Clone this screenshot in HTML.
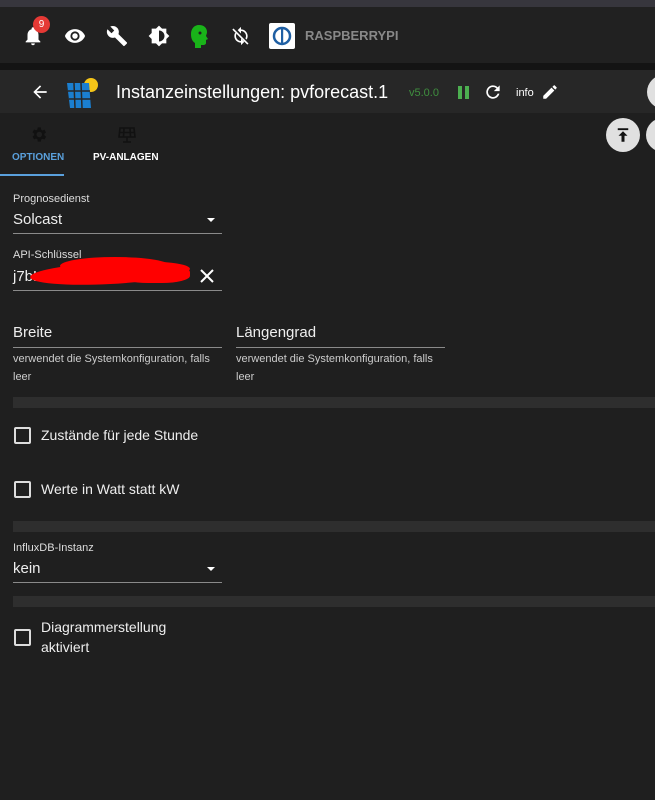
<!DOCTYPE html><html><head><meta charset="utf-8"><style>
body{margin:0;width:655px;height:800px;background:#1f1f1f;font-family:"Liberation Sans",sans-serif;color:#e8e8e8;position:relative;overflow:hidden}
.a{position:absolute}
.lbl{font-size:11px;color:#ddd}
.val{font-size:15px;color:#eee}
.line{height:1px;background:#8a8a8a}
.band{left:13px;width:642px;height:11px;background:#2e2e2e}
.cb{width:13px;height:13px;border:2px solid #ddd;border-radius:2px}
.help{font-size:11px;color:#ccc;line-height:18px}
</style></head><body>
<div class="a" style="left:0;top:0;width:655px;height:7px;background:#37363d"></div>
<div class="a" style="left:0;top:7px;width:655px;height:56px;background:#212121"></div>
<div class="a" style="left:0;top:63px;width:655px;height:7px;background:#141414"></div>
<div class="a" style="left:0;top:70px;width:655px;height:43px;background:#272727"></div>
<svg class="a" style="left:22px;top:25px" width="22" height="22" viewBox="0 0 24 24"><path fill="#fff" d="M12 22a2 2 0 0 0 2-2h-4a2 2 0 0 0 2 2zm6-6v-5c0-3.1-1.6-5.6-4.5-6.3V4a1.5 1.5 0 0 0-3 0v.7C7.6 5.4 6 7.9 6 11v5l-2 2v1h16v-1z"/></svg>
<div class="a" style="left:33px;top:16px;width:17px;height:17px;border-radius:50%;background:#e53935;font-size:10px;color:#fff;text-align:center;line-height:17px">9</div>
<svg class="a" style="left:64px;top:25px" width="22" height="22" viewBox="0 0 24 24"><path fill="#fff" d="M12 4.5C7 4.5 2.7 7.6 1 12c1.7 4.4 6 7.5 11 7.5s9.3-3.1 11-7.5c-1.7-4.4-6-7.5-11-7.5zM12 17a5 5 0 1 1 0-10 5 5 0 0 1 0 10zm0-8a3 3 0 1 0 0 6 3 3 0 0 0 0-6z"/></svg>
<svg class="a" style="left:106px;top:25px" width="22" height="22" viewBox="0 0 24 24"><path fill="#fff" d="M22.7 19l-9.1-9.1c.9-2.300.4-5-1.5-6.9-2-2-5-2.4-7.4-1.3L9 6 6 9 1.6 4.7C.4 7.1.9 10.1 2.9 12.1c1.9 1.9 4.6 2.4 6.9 1.5l9.1 9.1c.4.4 1 .4 1.4 0l2.3-2.3c.5-.4.5-1.1.1-1.4z"/></svg>
<svg class="a" style="left:148px;top:25px" width="22" height="22" viewBox="0 0 24 24"><path fill="#fff" d="M20 8.7V4h-4.7L12 .7 8.7 4H4v4.7L.7 12 4 15.3V20h4.7l3.3 3.3 3.3-3.3H20v-4.7l3.3-3.3L20 8.7zM12 18V6c3.3 0 6 2.7 6 6s-2.7 6-6 6z"/></svg>
<svg class="a" style="left:190px;top:24px" width="20" height="24" viewBox="0 0 20 24"><path fill="#19b319" d="M9 1c5 0 8 3 8 7 0 2-1 3-1 4l2 3-2 1v3c0 1-1 2-3 2h-2v3H5v-5C2 17 1 14 1 10 1 5 4 1 9 1z"/><circle cx="10" cy="9" r="1.5" fill="#222"/></svg>
<svg class="a" style="left:231px;top:26px" width="20" height="20" viewBox="0 0 24 24"><path fill="#fff" d="M12 4V1L8 5l4 4V6c3.3 0 6 2.7 6 6 0 1-.3 2-.7 2.8l1.5 1.5C19.5 15 20 13.6 20 12c0-4.4-3.6-8-8-8zm0 14c-3.3 0-6-2.7-6-6 0-1 .3-2 .7-2.8L5.2 7.7C4.5 9 4 10.4 4 12c0 4.4 3.6 8 8 8v3l4-4-4-4v3zM3 3l18 18-1.4 1.4L1.6 4.4z"/></svg>
<div class="a" style="left:269px;top:23px;width:26px;height:26px;background:#fff;border-radius:2px"></div>
<svg class="a" style="left:271px;top:25px" width="22" height="22" viewBox="0 0 22 22"><circle cx="11" cy="11" r="8" fill="none" stroke="#1f5fa3" stroke-width="2.5"/><rect x="10" y="4" width="2.2" height="14" fill="#1f5fa3"/></svg>
<div class="a" style="left:305px;top:28px;font-size:13px;font-weight:bold;color:#888">RASPBERRYPI</div>
<svg class="a" style="left:30px;top:82px" width="20" height="20" viewBox="0 0 24 24"><path fill="#fff" d="M20 11H7.8l5.6-5.6L12 4l-8 8 8 8 1.4-1.4L7.8 13H20z"/></svg>
<svg class="a" style="left:64px;top:74px" width="38" height="36" viewBox="0 0 38 36"><circle cx="27" cy="11" r="7" fill="#f5c518"/><path fill="#1b7fd0" d="M3 9h22l2 25H6z"/><path stroke="#272727" stroke-width="1.5" d="M10 9l1 25M17 9l1 25M4 17h22M5 25h22"/></svg>
<div class="a" style="left:116px;top:82px;font-size:18px;color:#fff">Instanzeinstellungen: pvforecast.1</div>
<div class="a" style="left:409px;top:87px;font-size:11px;color:#3f8f3f">v5.0.0</div>
<div class="a" style="left:458px;top:86px;width:4px;height:13px;background:#4caf50"></div>
<div class="a" style="left:465px;top:86px;width:4px;height:13px;background:#4caf50"></div>
<svg class="a" style="left:483px;top:82px" width="20" height="20" viewBox="0 0 24 24"><path fill="#fff" d="M17.6 6.4A8 8 0 1 0 19.7 14h-2.1A6 6 0 1 1 12 6c1.7 0 3.1.7 4.2 1.8L13 11h7V4z"/></svg>
<div class="a" style="left:516px;top:87px;font-size:11px;color:#fff">info</div>
<svg class="a" style="left:541px;top:83px" width="18" height="18" viewBox="0 0 24 24"><path fill="#fff" d="M3 17.2V21h3.8l11-11-3.8-3.8zM20.7 7c.4-.4.4-1 0-1.4l-2.3-2.3c-.4-.4-1-.4-1.4 0l-1.8 1.8 3.8 3.8z"/></svg>
<div class="a" style="left:647px;top:75px;width:34px;height:34px;border-radius:50%;background:#e0e0e0"></div>
<svg class="a" style="left:29px;top:125px" width="19" height="19" viewBox="0 0 24 24"><path fill="#111" d="M19.4 13a7.5 7.5 0 0 0 0-2l2.1-1.6-2-3.5-2.5 1a7 7 0 0 0-1.7-1L15 3h-4l-.4 2.7a7 7 0 0 0-1.7 1l-2.5-1-2 3.5L6.6 11a7.5 7.5 0 0 0 0 2l-2.1 1.6 2 3.5 2.5-1c.5.4 1.1.7 1.7 1L11 21h4l.4-2.700c.6-.3 1.2-.6 1.700-1l2.5 1 2-3.5zM13 15.5a3.5 3.5 0 1 1 0-7 3.5 3.5 0 0 1 0 7z"/></svg>
<svg class="a" style="left:117px;top:126px" width="20" height="18" viewBox="0 0 20 18"><path fill="none" stroke="#111" stroke-width="1.6" d="M3 2h14l1 9H2zM7 2l-.5 9M13 2l.5 9M2.5 6.5h15M10 11v5M6 16h8"/></svg>
<div class="a" style="left:12px;top:152px;font-size:10px;font-weight:bold;color:#5aa0dc">OPTIONEN</div>
<div class="a" style="left:93px;top:152px;font-size:10px;font-weight:bold;color:#fff">PV-ANLAGEN</div>
<div class="a" style="left:0;top:174px;width:64px;height:2px;background:#5aa0dc"></div>
<div class="a" style="left:0;top:113px;width:0;height:0"></div>
<div class="a" style="left:606px;top:118px;width:34px;height:34px;border-radius:50%;background:#e0e0e0"></div>
<svg class="a" style="left:614px;top:126px" width="18" height="18" viewBox="0 0 24 24"><path fill="#111" d="M5 3h14v2.5H5zm7 4l-6 6h4v8h4v-8h4z"/></svg>
<div class="a" style="left:646px;top:118px;width:34px;height:34px;border-radius:50%;background:#e0e0e0"></div>
<div class="a lbl" style="left:13px;top:193px">Prognosedienst</div>
<div class="a val" style="left:13px;top:211px">Solcast</div>
<div class="a" style="left:207px;top:218px;border-left:4px solid transparent;border-right:4px solid transparent;border-top:4px solid #fff"></div>
<div class="a line" style="left:13px;top:233px;width:209px"></div>
<div class="a lbl" style="left:13px;top:249px">API-Schlüssel</div>
<div class="a val" style="left:13px;top:268px">j7bL.            5</div>
<div class="a" style="left:30px;top:262px;width:160px;height:22px;background:#f00;border-radius:50%;transform:rotate(-3deg)"></div>
<div class="a" style="left:60px;top:257px;width:110px;height:18px;background:#f00;border-radius:50%"></div>
<div class="a" style="left:120px;top:265px;width:70px;height:18px;background:#f00;border-radius:40%"></div>
<svg class="a" style="left:199px;top:268px" width="16" height="16" viewBox="0 0 16 16"><path stroke="#fff" stroke-width="2" d="M2 2l12 12M14 2L2 14"/></svg>
<div class="a line" style="left:13px;top:290px;width:209px"></div>
<div class="a val" style="left:13px;top:324px">Breite</div>
<div class="a line" style="left:13px;top:347px;width:209px"></div>
<div class="a help" style="left:13px;top:350px;width:215px">verwendet die Systemkonfiguration, falls leer</div>
<div class="a val" style="left:236px;top:324px">Längengrad</div>
<div class="a line" style="left:236px;top:347px;width:209px"></div>
<div class="a help" style="left:236px;top:350px;width:215px">verwendet die Systemkonfiguration, falls leer</div>
<div class="a band" style="top:397px"></div>
<div class="a cb" style="left:14px;top:427px"></div>
<div class="a val" style="left:41px;top:427px;font-size:14px">Zustände für jede Stunde</div>
<div class="a cb" style="left:14px;top:481px"></div>
<div class="a val" style="left:41px;top:481px;font-size:14px">Werte in Watt statt kW</div>
<div class="a band" style="top:521px"></div>
<div class="a lbl" style="left:13px;top:542px">InfluxDB-Instanz</div>
<div class="a val" style="left:13px;top:560px">kein</div>
<div class="a" style="left:207px;top:567px;border-left:4px solid transparent;border-right:4px solid transparent;border-top:4px solid #fff"></div>
<div class="a line" style="left:13px;top:582px;width:209px"></div>
<div class="a band" style="top:596px"></div>
<div class="a cb" style="left:14px;top:629px"></div>
<div class="a val" style="left:41px;top:617px;font-size:14px;line-height:20px">Diagrammerstellung<br>aktiviert</div>
</body></html>
